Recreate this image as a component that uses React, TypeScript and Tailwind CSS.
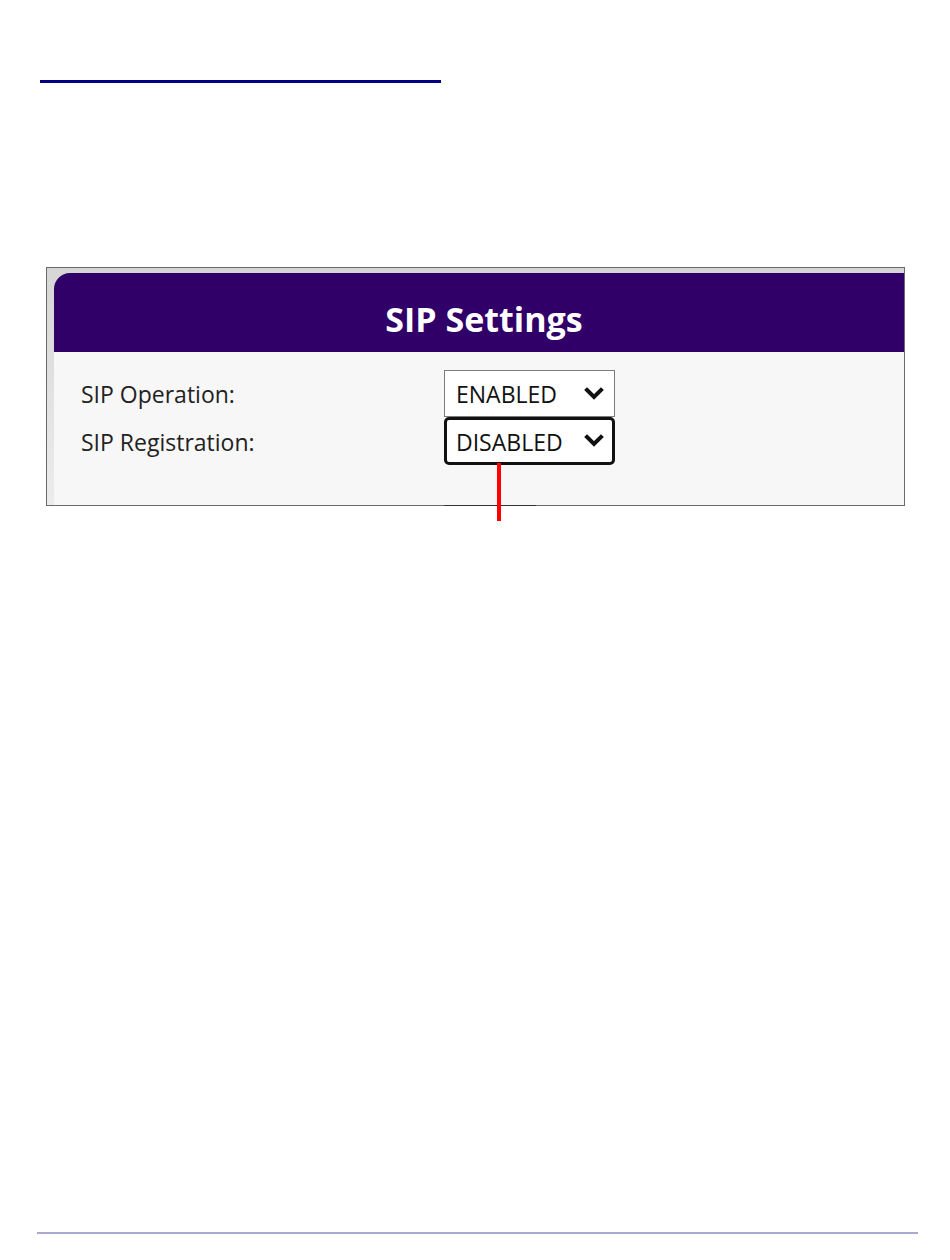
import React from 'react';

function Chevron() {
  return (
    <svg width="20" height="14" viewBox="0 0 20 14" className="shrink-0">
      <path d="M3 3 L10 10 L17 3" fill="none" stroke="#111" strokeWidth="4" strokeLinecap="square" />
    </svg>
  );
}

interface SelectBoxProps {
  value: string;
  focused?: boolean;
}

function SelectBox({ value, focused }: SelectBoxProps) {
  return (
    <div
      className={
        focused
          ? 'flex items-center justify-between w-[171px] h-[48px] bg-white border-[3px] border-[#111] rounded-[5px] pl-[9px] pr-[8px]'
          : 'flex items-center justify-between w-[171px] h-[47px] bg-white border border-[#7b7b7b] pl-[11px] pr-[10px]'
      }
    >
      <span className="text-[23px] leading-none text-[#111] pt-[2px]">{value}</span>
      <Chevron />
    </div>
  );
}

export default function App() {
  return (
    <div className="relative w-[950px] h-[1260px] bg-white" style={{ fontFamily: '"Open Sans", "Noto Sans", sans-serif' }}>
      {/* title rule */}
      <div className="pt-[80px] pl-[40px]">
        <div className="h-[3px] w-[401px] bg-[#000080]" />
      </div>

      {/* screenshot frame */}
      <div className="mt-[184px] ml-[46px] w-[859px] h-[239px] border border-[#6a6a6a] bg-gradient-to-b from-[#d6d6d6] to-[#ececec] pt-[5px] pl-[7px] flex">
        <div className="flex-1 flex flex-col">
          <div className="h-[79px] shrink-0 bg-[#300068] rounded-tl-[16px] flex items-center justify-center pl-[10px] pt-[12px]">
            <h2 className="text-[34px] leading-none font-bold text-white">SIP Settings</h2>
          </div>
          <div className="flex-1 bg-[#f7f7f7] pt-[18px] pl-[27px] flex flex-col">
            <div className="flex items-center">
              <span className="w-[363px] text-[23px] leading-none text-[#222] pt-[2px]">SIP Operation:</span>
              <SelectBox value="ENABLED" />
            </div>
            <div className="flex items-center">
              <span className="w-[363px] text-[23px] leading-none text-[#222] pt-[2px]">SIP Registration:</span>
              <SelectBox value="DISABLED" focused />
            </div>
            <div className="mt-auto ml-[363px] w-[92px] h-[1px] bg-[#333] translate-y-[1px]" />
          </div>
        </div>
      </div>

      {/* callout line */}
      <div className="absolute left-[497px] top-[463px] w-[4px] h-[58px] bg-[#ff0000]" />

      {/* footer rule */}
      <div className="mt-[726px] ml-[37px] w-[881px] h-[2px] bg-[#a9a9d2]" />
    </div>
  );
}
